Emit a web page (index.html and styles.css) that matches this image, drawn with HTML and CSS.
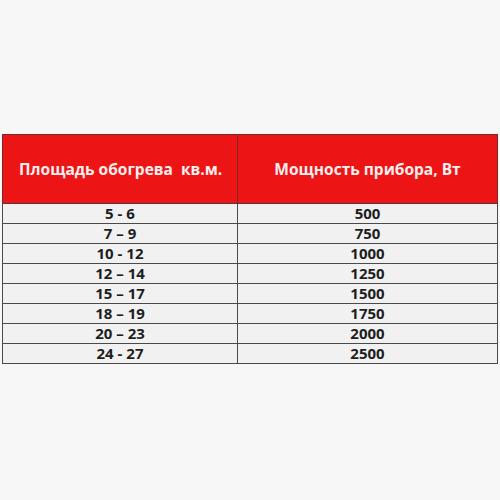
FILE: index.html
```html
<!DOCTYPE html>
<html lang="ru">
<head>
<meta charset="utf-8">
<link rel="stylesheet" href="styles.css">
</head>
<body>
<div class="page">
<table class="power">
<thead>
<tr><th class="c1">Площадь обогрева&nbsp; кв.м.</th><th class="c2">Мощность прибора, Вт</th></tr>
</thead>
<tbody>
<tr><td>5 - 6</td><td>500</td></tr>
<tr><td>7 – 9</td><td>750</td></tr>
<tr><td>10 - 12</td><td>1000</td></tr>
<tr><td>12 – 14</td><td>1250</td></tr>
<tr><td>15 – 17</td><td>1500</td></tr>
<tr><td>18 – 19</td><td>1750</td></tr>
<tr><td>20 – 23</td><td>2000</td></tr>
<tr><td>24 - 27</td><td>2500</td></tr>
</tbody>
</table>
</div>
</body>
</html>
```
FILE: styles.css
```css
html, body {
  margin: 0;
  padding: 0;
  background: #f7f7f7;
}
.page {
  width: 500px;
  height: 500px;
  padding: 134px 2px 0 2px;
  box-sizing: border-box;
}
.power {
  width: 496px;
  border-collapse: collapse;
  table-layout: fixed;
  font-family: "Open Sans", "Noto Sans", sans-serif;
  font-weight: 700;
}
.power th {
  background: #ec1414;
  color: #fbeeee;
  height: 68px;
  padding: 0;
  font-size: 15.5px;
  border: 1px solid #7a2a2a;
  border-bottom-color: #5a3535;
}
.power th.c1 {
  width: 218px;
  text-align: left;
  padding-left: 16px;
}
.power th.c2 {
  text-align: center;
}
.power td {
  background: #f1f1f1;
  color: #1e1e1e;
  height: 19px;
  padding: 0;
  font-size: 15px;
  line-height: 19px;
  text-align: center;
  border: 1px solid #4a4a4a;
}
```
